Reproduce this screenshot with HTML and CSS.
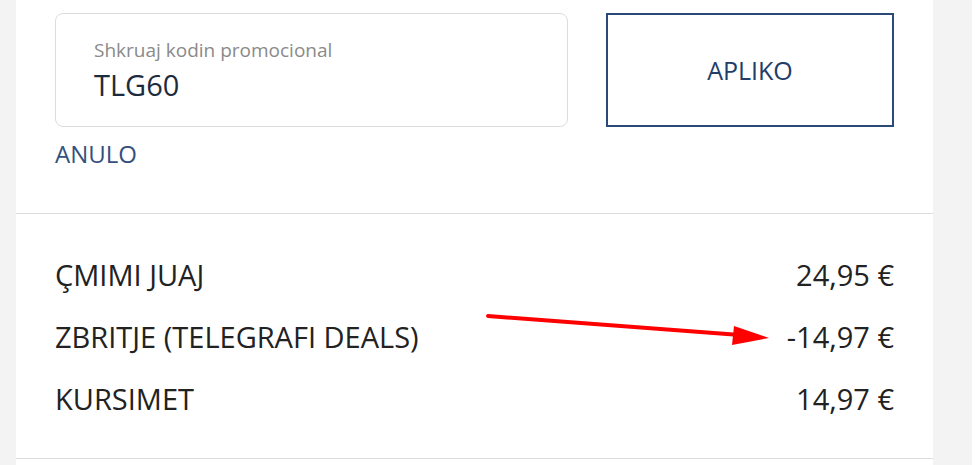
FILE: index.html
```html
<!DOCTYPE html>
<html lang="sq">
<head>
    <meta charset="UTF-8">
    <meta name="viewport" content="width=device-width, initial-scale=1.0">
    <title>Kodi promocional</title>
    <link rel="stylesheet" href="styles.css">
</head>
<body>
    <div class="page">
        <div class="card">
            <!-- Promo code -->
            <div class="promo">
                <div class="promo-row">
                    <label class="promo-field">
                        <span class="promo-label">Shkruaj kodin promocional</span>
                        <span class="promo-value">TLG60</span>
                    </label>
                    <button class="apply-btn">APLIKO</button>
                </div>
                <a class="cancel-link" href="#">ANULO</a>
            </div>

            <!-- Summary -->
            <div class="summary">
                <div class="summary-row">
                    <span>ÇMIMI JUAJ</span>
                    <span>24,95 €</span>
                </div>
                <div class="summary-row">
                    <span>ZBRITJE (TELEGRAFI DEALS)</span>
                    <span>-14,97 €</span>
                </div>
                <div class="summary-row">
                    <span>KURSIMET</span>
                    <span>14,97 €</span>
                </div>
                <svg class="arrow" width="300" height="40" viewBox="0 0 300 40">
                    <line x1="6" y1="6" x2="258" y2="25" stroke="#f00" stroke-width="4" stroke-linecap="round"/>
                    <polygon points="252,16 287,28 250,35" fill="#f00"/>
                </svg>
            </div>
        </div>
        <div class="side"></div>
    </div>
</body>
</html>
```

FILE: styles.css
```css
body {
    margin: 0;
    padding: 0;
    background-color: #fff;
    font-family: "Open Sans", "Lato", sans-serif;
    color: #222;
}
.page {
    display: flex;
    width: 972px;
    height: 465px;
    padding-left: 16px;
    box-sizing: border-box;
    background-color: #f3f3f3;
    overflow: hidden;
}
.card {
    width: 917px;
    background-color: #fff;
}
.promo {
    padding: 13px 39px 0 39px;
    height: 200px;
    border-bottom: 1px solid #dedede;
}
.promo-row {
    display: flex;
    gap: 38px;
}
.promo-field {
    flex: 1;
    height: 114px;
    box-sizing: border-box;
    border: 1px solid #dcdcdc;
    border-radius: 8px;
    padding: 25px 0 0 38px;
    display: flex;
    flex-direction: column;
}
.promo-label {
    font-size: 19px;
    color: #8a8a8a;
    line-height: 22px;
}
.promo-value {
    font-size: 29px;
    color: #1d2b3e;
    line-height: 30px;
    margin-top: 9px;
}
.apply-btn {
    width: 288px;
    height: 114px;
    padding: 0;
    background: #fff;
    border: 2px solid #2b4a78;
    font-family: inherit;
    font-size: 25px;
    color: #213d68;
    cursor: pointer;
}
.cancel-link {
    display: inline-block;
    margin-top: 12px;
    font-size: 24px;
    line-height: 30px;
    color: #34507c;
    text-decoration: none;
}
.summary {
    position: relative;
    padding: 30px 39px 0 39px;
    height: 245px;
    box-sizing: border-box;
    border-bottom: 1px solid #dedede;
}
.summary-row {
    display: flex;
    justify-content: space-between;
    font-size: 29px;
    line-height: 62px;
    height: 62px;
}
.arrow {
    position: absolute;
    left: 466px;
    top: 96px;
}
```
